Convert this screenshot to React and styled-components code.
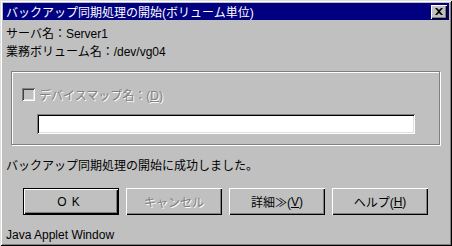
import React from "react";
import styled, { createGlobalStyle } from "styled-components";

const Global = createGlobalStyle`
  html, body {
    margin: 0;
    padding: 0;
    background: #c0c0c0;
  }
  body {
    font-family: "Liberation Sans", "Noto Sans CJK JP", sans-serif;
    font-size: 12px;
    color: #000;
  }
`;

const Window = styled.div`
  box-sizing: border-box;
  width: 452px;
  height: 246px;
  padding: 3px;
  background: #c0c0c0;
  box-shadow: inset 1px 1px 0 #dfdfdf, inset -1px -1px 0 #000,
    inset 2px 2px 0 #fff, inset -2px -2px 0 #808080;
  display: flex;
  flex-direction: column;
`;

const TitleBar = styled.div`
  height: 18px;
  background: #000080;
  color: #fff;
  display: flex;
  align-items: center;
  justify-content: space-between;
  padding: 0 2px 0 3px;
  font-size: 12px;
  white-space: nowrap;
`;

const CloseButton = styled.div`
  box-sizing: border-box;
  width: 16px;
  height: 14px;
  background: #c0c0c0;
  box-shadow: inset 1px 1px 0 #fff, inset -1px -1px 0 #000,
    inset -2px -2px 0 #808080;
  display: flex;
  align-items: center;
  justify-content: center;
`;

const Body = styled.div`
  display: flex;
  flex-direction: column;
  padding: 0 3px;
`;

const Info = styled.div`
  margin-top: 5px;
  line-height: 18px;
`;

const GroupBox = styled.fieldset`
  box-sizing: border-box;
  margin: 10px 0 0 5px;
  padding: 0;
  width: 429px;
  min-inline-size: 0;
  height: 74px;
  border: 1px solid #808080;
  box-shadow: 1px 1px 0 #fff, inset 1px 1px 0 #fff;
  display: flex;
  flex-direction: column;
`;

const CheckRow = styled.label`
  display: flex;
  align-items: center;
  gap: 4px;
  margin: 15px 0 0 10px;
  height: 14px;
`;

const CheckBox = styled.span`
  box-sizing: border-box;
  width: 13px;
  height: 13px;
  background: #c0c0c0;
  box-shadow: inset 1px 1px 0 #808080, inset -1px -1px 0 #fff,
    inset 2px 2px 0 #404040, inset -2px -2px 0 #dfdfdf;
`;

const Disabled = styled.span`
  color: #808080;
  text-shadow: 1px 1px 0 #fff;
  white-space: nowrap;
`;

const Mnemonic = styled.span`
  text-decoration: underline;
`;

const TextField = styled.div`
  box-sizing: border-box;
  margin: 13px 0 0 25px;
  width: 378px;
  height: 20px;
  background: #fff;
  box-shadow: inset 1px 1px 0 #808080, inset -1px -1px 0 #fff,
    inset 2px 2px 0 #000, inset -2px -2px 0 #dfdfdf;
`;

const Message = styled.div`
  margin-top: 12px;
  line-height: 18px;
`;

const ButtonRow = styled.div`
  display: flex;
  gap: 7px;
  margin: 13px 0 0 17px;
`;

const Button = styled.div`
  box-sizing: border-box;
  width: 96px;
  height: 27px;
  display: flex;
  align-items: center;
  justify-content: center;
  background: #c0c0c0;
  white-space: nowrap;
  letter-spacing: ${({ $spaced }) => ($spaced ? "5px" : "0")};
  color: ${({ $disabled }) => ($disabled ? "#808080" : "#000")};
  text-shadow: ${({ $disabled }) => ($disabled ? "1px 1px 0 #fff" : "none")};
  box-shadow: ${({ $default }) =>
    $default
      ? "inset 1px 1px 0 #000, inset -1px -1px 0 #000, inset 2px 2px 0 #fff, inset -2px -2px 0 #000, inset -3px -3px 0 #808080"
      : "inset 1px 1px 0 #fff, inset -1px -1px 0 #000, inset -2px -2px 0 #808080"};
`;

const Footer = styled.div`
  margin-top: 11px;
  line-height: 18px;
`;

const App = () => {
  return (
    <>
      <Global />
      <Window>
        <TitleBar>
          <span>バックアップ同期処理の開始(ボリューム単位)</span>
          <CloseButton>
            <svg width="8" height="7" viewBox="0 0 8 7">
              <path d="M0 0h2l2 2 2-2h2L5 3.5 8 7H6L4 5 2 7H0l3-3.5z" fill="#000" />
            </svg>
          </CloseButton>
        </TitleBar>
        <Body>
          <Info>
            <div>サーバ名：Server1</div>
            <div>業務ボリューム名：/dev/vg04</div>
          </Info>
          <GroupBox>
            <CheckRow>
              <CheckBox />
              <Disabled>
                デバイスマップ名：(<Mnemonic>D</Mnemonic>)
              </Disabled>
            </CheckRow>
            <TextField />
          </GroupBox>
          <Message>バックアップ同期処理の開始に成功しました。</Message>
          <ButtonRow>
            <Button $default $spaced>
              OK
            </Button>
            <Button $disabled>キャンセル</Button>
            <Button>
              詳細≫(<Mnemonic>V</Mnemonic>)
            </Button>
            <Button>
              ヘルプ(<Mnemonic>H</Mnemonic>)
            </Button>
          </ButtonRow>
          <Footer>Java Applet Window</Footer>
        </Body>
      </Window>
    </>
  );
};

export default App;
